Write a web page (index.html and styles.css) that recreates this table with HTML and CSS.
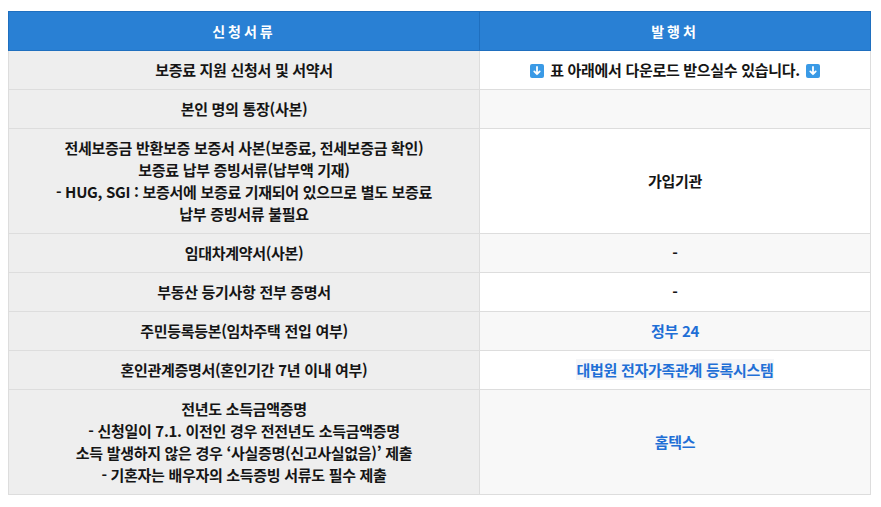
FILE: index.html
```html
<!DOCTYPE html>
<html lang="ko">
<head>
<meta charset="utf-8">
<link rel="stylesheet" href="styles.css">
</head>
<body>
<table class="doc-table">
  <thead>
    <tr>
      <th class="col-doc">신청서류</th>
      <th class="col-issuer">발행처</th>
    </tr>
  </thead>
  <tbody>
    <tr>
      <td class="doc">보증료 지원 신청서 및 서약서</td>
      <td class="issuer"><span class="dl-icon"><svg viewBox="0 0 14 14" width="14" height="14"><rect width="14" height="14" rx="2" fill="#3a9ae6"/><path d="M7 3v7M4.3 7.4L7 10.2 9.7 7.4" stroke="#fff" stroke-width="1.8" fill="none" stroke-linecap="round" stroke-linejoin="round"/></svg></span> 표 아래에서 다운로드 받으실수 있습니다. <span class="dl-icon"><svg viewBox="0 0 14 14" width="14" height="14"><rect width="14" height="14" rx="2" fill="#3a9ae6"/><path d="M7 3v7M4.3 7.4L7 10.2 9.7 7.4" stroke="#fff" stroke-width="1.8" fill="none" stroke-linecap="round" stroke-linejoin="round"/></svg></span></td>
    </tr>
    <tr>
      <td class="doc">본인 명의 통장(사본)</td>
      <td class="issuer"></td>
    </tr>
    <tr>
      <td class="doc">전세보증금 반환보증 보증서 사본(보증료, 전세보증금 확인)<br>보증료 납부 증빙서류(납부액 기재)<br>- HUG, SGI : 보증서에 보증료 기재되어 있으므로 별도 보증료<br>납부 증빙서류 불필요</td>
      <td class="issuer">가입기관</td>
    </tr>
    <tr>
      <td class="doc">임대차계약서(사본)</td>
      <td class="issuer">-</td>
    </tr>
    <tr>
      <td class="doc">부동산 등기사항 전부 증명서</td>
      <td class="issuer">-</td>
    </tr>
    <tr>
      <td class="doc">주민등록등본(임차주택 전입 여부)</td>
      <td class="issuer"><span class="link">정부 24</span></td>
    </tr>
    <tr>
      <td class="doc">혼인관계증명서(혼인기간 7년 이내 여부)</td>
      <td class="issuer"><span class="link link-hl">대법원 전자가족관계 등록시스템</span></td>
    </tr>
    <tr>
      <td class="doc">전년도 소득금액증명<br>- 신청일이 7.1. 이전인 경우 전전년도 소득금액증명<br>소득 발생하지 않은 경우 ‘사실증명(신고사실없음)’ 제출<br>- 기혼자는 배우자의 소득증빙 서류도 필수 제출</td>
      <td class="issuer"><span class="link">홈텍스</span></td>
    </tr>
  </tbody>
</table>
</body>
</html>
```
FILE: styles.css
```css
html, body {
  margin: 0;
  padding: 0;
  background: #fff;
}
body {
  padding: 11px 8px 0 8px;
  font-family: "Noto Sans CJK KR", "Noto Sans", sans-serif;
  color: #151515;
}
.doc-table {
  width: 860px;
  border-collapse: collapse;
  table-layout: fixed;
  font-size: 15px;
  letter-spacing: -0.3px;
}
.col-doc { width: 470px; }
.col-issuer { width: 390px; }
.doc-table th {
  background: #2980d4;
  color: #fff;
  font-size: 14px;
  font-weight: 700;
  letter-spacing: 3px;
  height: 38px;
  padding: 0;
  border: 1px solid #1f6fbf;
  text-align: center;
  vertical-align: middle;
}
.doc-table td {
  border: 1px solid #dddddd;
  padding: 8px 10px;
  line-height: 22px;
  text-align: center;
  vertical-align: middle;
  font-weight: 700;
}
.doc-table td.doc {
  background: #eeeeee;
}
.doc-table tbody tr:nth-child(odd) td.issuer { background: #ffffff; }
.doc-table tbody tr:nth-child(even) td.issuer { background: #f8f8f8; }
.dl-icon {
  display: inline-block;
  width: 14px;
  height: 14px;
  margin: 0 2px;
  vertical-align: -2px;
}
.dl-icon svg { display: block; }
.link {
  color: #1f6fd6;
  font-weight: 700;
}
.link-hl {
  background: #f5f6f8;
  padding: 0 1px;
}
```
